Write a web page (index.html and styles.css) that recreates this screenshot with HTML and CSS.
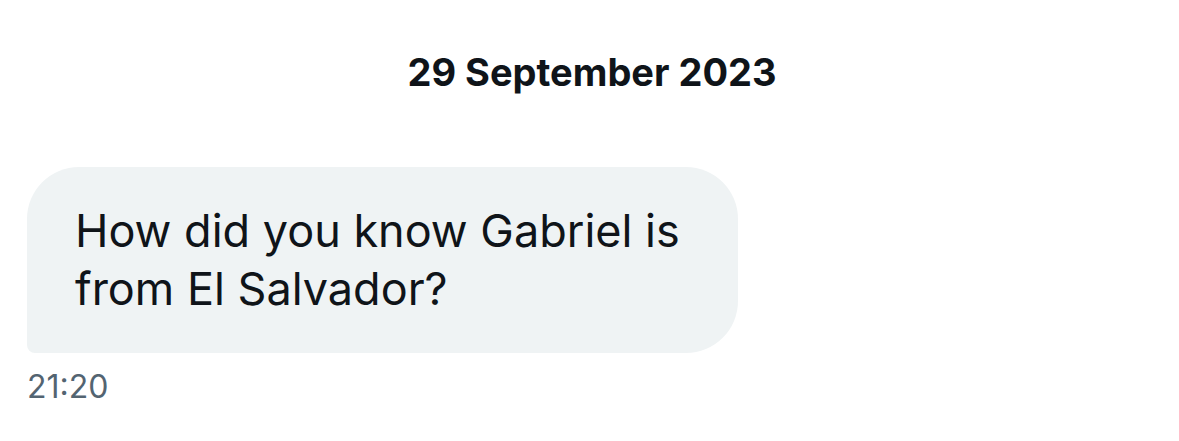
FILE: index.html
```html
<!DOCTYPE html>
<html lang="en">
<head>
  <meta charset="UTF-8" />
  <title>Messages</title>
  <link rel="stylesheet" href="styles.css">
</head>
<body>

<div class="conversation">
  <div class="day-label">29 September 2023</div>

  <div class="message incoming">
    <div class="bubble">How did you know Gabriel is from El Salvador?</div>
    <div class="time">21:20</div>
  </div>
</div>

</body>
</html>
```

FILE: styles.css
```css
body {
  margin: 0;
  background: #ffffff;
  font-family: 'Inter', 'Liberation Sans', sans-serif;
  color: #0f1419;
}
.conversation {
  padding: 49px 27px 0 27px;
}
.day-label {
  text-align: center;
  font-size: 38px;
  line-height: 46px;
  font-weight: 700;
  padding-left: 5px;
}
.message {
  margin-top: 72px;
}
.bubble {
  width: 711px;
  box-sizing: border-box;
  padding: 35px 48px;
  background: #eff3f4;
  border-radius: 52px 52px 52px 8px;
  font-size: 45px;
  line-height: 58px;
}
.time {
  margin-top: 15px;
  font-size: 32px;
  line-height: 38px;
  color: #536471;
}
```
